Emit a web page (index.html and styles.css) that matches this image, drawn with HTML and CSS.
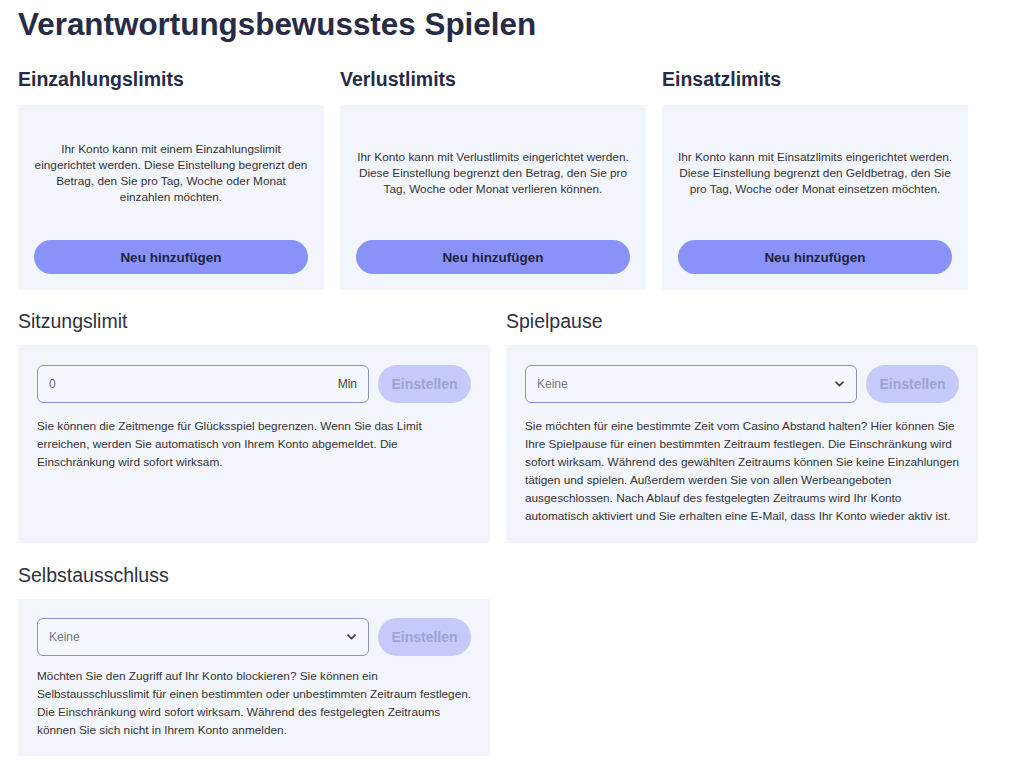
FILE: index.html
```html
<!DOCTYPE html>
<html lang="de">
<head>
<meta charset="utf-8">
<title>Verantwortungsbewusstes Spielen</title>
<link rel="stylesheet" href="styles.css">
</head>
<body>
<div class="page">
  <h1 class="title">Verantwortungsbewusstes Spielen</h1>

  <div class="row3">
    <section class="col">
      <h2 class="head-bold">Einzahlungslimits</h2>
      <div class="card limit-card">
        <div class="limit-text"><p>Ihr Konto kann mit einem Einzahlungslimit eingerichtet werden. Diese Einstellung begrenzt den Betrag, den Sie pro Tag, Woche oder Monat einzahlen möchten.</p></div>
        <button class="btn-add">Neu hinzufügen</button>
      </div>
    </section>
    <section class="col">
      <h2 class="head-bold">Verlustlimits</h2>
      <div class="card limit-card">
        <div class="limit-text"><p>Ihr Konto kann mit Verlustlimits eingerichtet werden. Diese Einstellung begrenzt den Betrag, den Sie pro Tag, Woche oder Monat verlieren können.</p></div>
        <button class="btn-add">Neu hinzufügen</button>
      </div>
    </section>
    <section class="col">
      <h2 class="head-bold">Einsatzlimits</h2>
      <div class="card limit-card">
        <div class="limit-text"><p>Ihr Konto kann mit Einsatzlimits eingerichtet werden. Diese Einstellung begrenzt den Geldbetrag, den Sie pro Tag, Woche oder Monat einsetzen möchten.</p></div>
        <button class="btn-add">Neu hinzufügen</button>
      </div>
    </section>
  </div>

  <div class="row2">
    <section class="col">
      <h2 class="head-reg">Sitzungslimit</h2>
      <div class="card form-card">
        <div class="form-line">
          <div class="field"><span class="val">0</span><span class="unit">Min</span></div>
          <button class="btn-set">Einstellen</button>
        </div>
        <p class="desc">Sie können die Zeitmenge für Glücksspiel begrenzen. Wenn Sie das Limit erreichen, werden Sie automatisch von Ihrem Konto abgemeldet. Die Einschränkung wird sofort wirksam.</p>
      </div>
    </section>
    <section class="col">
      <h2 class="head-reg">Spielpause</h2>
      <div class="card form-card">
        <div class="form-line">
          <div class="field"><span class="ph">Keine</span><svg class="chev" width="9" height="6" viewBox="0 0 9 6"><path d="M1 1.2 L4.5 4.6 L8 1.2" fill="none" stroke="#444" stroke-width="1.7" stroke-linecap="round" stroke-linejoin="round"/></svg></div>
          <button class="btn-set">Einstellen</button>
        </div>
        <p class="desc">Sie möchten für eine bestimmte Zeit vom Casino Abstand halten? Hier können Sie Ihre Spielpause für einen bestimmten Zeitraum festlegen. Die Einschränkung wird sofort wirksam. Während des gewählten Zeitraums können Sie keine Einzahlungen tätigen und spielen. Außerdem werden Sie von allen Werbeangeboten ausgeschlossen. Nach Ablauf des festgelegten Zeitraums wird Ihr Konto automatisch aktiviert und Sie erhalten eine E-Mail, dass Ihr Konto wieder aktiv ist.</p>
      </div>
    </section>
  </div>

  <div class="row2 row-last">
    <section class="col">
      <h2 class="head-reg">Selbstausschluss</h2>
      <div class="card form-card tight">
        <div class="form-line">
          <div class="field"><span class="ph">Keine</span><svg class="chev" width="9" height="6" viewBox="0 0 9 6"><path d="M1 1.2 L4.5 4.6 L8 1.2" fill="none" stroke="#444" stroke-width="1.7" stroke-linecap="round" stroke-linejoin="round"/></svg></div>
          <button class="btn-set">Einstellen</button>
        </div>
        <p class="desc">Möchten Sie den Zugriff auf Ihr Konto blockieren? Sie können ein Selbstausschlusslimit für einen bestimmten oder unbestimmten Zeitraum festlegen. Die Einschränkung wird sofort wirksam. Während des festgelegten Zeitraums können Sie sich nicht in Ihrem Konto anmelden.</p>
      </div>
    </section>
  </div>
</div>
</body>
</html>
```

FILE: styles.css
```css
* { box-sizing: border-box; }
html, body { margin: 0; padding: 0; background: #ffffff; }
body {
  font-family: "Liberation Sans", Arial, sans-serif;
  color: #333;
}
.page {
  padding: 7px 0 0 18px;
  width: 1000px;
}
.title {
  margin: 0 0 24px;
  font-size: 31.4px;
  line-height: 36px;
  font-weight: 700;
  color: #272b45;
}
.row3 {
  display: grid;
  grid-template-columns: repeat(3, 306px);
  column-gap: 16px;
}
.row2 {
  display: grid;
  grid-template-columns: repeat(2, 472px);
  column-gap: 16px;
  margin-top: 19px;
}
.row-last { margin-top: 20px; }
.col { display: flex; flex-direction: column; }
.head-bold {
  margin: 0 0 14px;
  font-size: 19.5px;
  line-height: 24px;
  font-weight: 700;
  color: #272b45;
}
.head-reg {
  margin: 0 0 12px;
  font-size: 19.5px;
  line-height: 24px;
  font-weight: 400;
  color: #2f3140;
}
.card {
  background: #f3f5fd;
}
.limit-card {
  height: 185px;
  padding: 0 16px 16px;
  display: flex;
  flex-direction: column;
}
.limit-text {
  flex: 1;
  display: flex;
  align-items: center;
  justify-content: center;
  margin: 0 -1px;
}
.limit-text p {
  margin: 0;
  font-size: 11.8px;
  line-height: 16px;
  text-align: center;
  color: #333;
}
.btn-add {
  height: 34px;
  border: 0;
  border-radius: 17px;
  background: #8992f8;
  color: #1f2340;
  font-family: "Liberation Sans", Arial, sans-serif;
  font-size: 13.5px;
  font-weight: 700;
  padding: 0;
}
.form-card {
  flex: 1;
  padding: 20px 19px 18px 19px;
}
.form-card.tight { padding-top: 19px; padding-bottom: 17px; }
.form-line {
  display: flex;
  gap: 9px;
}
.field {
  flex: 1;
  height: 38px;
  border: 1px solid #8c92c9;
  border-radius: 6px;
  background: #f5f7fe;
  display: flex;
  align-items: center;
  justify-content: space-between;
  padding: 0 11px 0 11px;
  font-size: 12px;
}
.val { color: #666; }
.unit { color: #444; }
.ph { color: #777; }
.chev { margin-right: 1px; }
.btn-set {
  width: 93px;
  height: 38px;
  border: 0;
  border-radius: 19px;
  background: #c5cafb;
  color: #9ea3d6;
  font-family: "Liberation Sans", Arial, sans-serif;
  font-size: 14px;
  font-weight: 700;
  padding: 0;
}
.desc {
  margin: 14px -6px 0 0;
  font-size: 11.8px;
  line-height: 18px;
  color: #333;
}
.tight .desc { margin-top: 11px; }
```
